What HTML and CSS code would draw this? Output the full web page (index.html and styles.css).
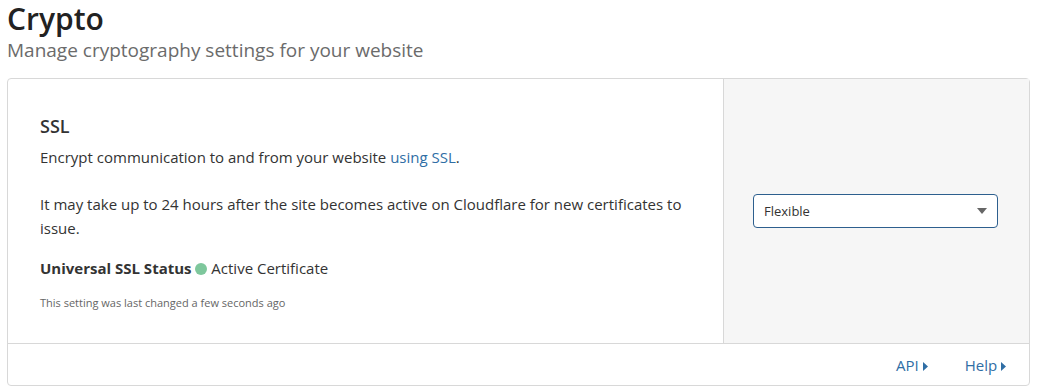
FILE: index.html
```html
<!DOCTYPE html>
<html lang="en">
<head>
    <meta charset="UTF-8">
    <title>Crypto</title>
    <link rel="stylesheet" href="styles.css">
</head>
<body>
    <h1 class="page-title">Crypto</h1>
    <p class="page-sub">Manage cryptography settings for your website</p>

    <div class="card">
        <div class="card-body">
            <div class="card-main">
                <h3 class="card-title">SSL</h3>
                <p>Encrypt communication to and from your website <a href="#">using SSL</a>.</p>
                <p class="note">It may take up to 24 hours after the site becomes active on Cloudflare for new certificates to issue.</p>
                <p class="status"><strong>Universal SSL Status</strong> <span class="dot"></span> Active Certificate</p>
                <p class="changed">This setting was last changed a few seconds ago</p>
            </div>
            <div class="card-side">
                <div class="select">
                    <span>Flexible</span>
                    <svg width="10" height="6" viewBox="0 0 10 6"><path d="M0 0h10L5 6z" fill="#666"/></svg>
                </div>
            </div>
        </div>
        <div class="card-foot">
            <a href="#">API <svg width="5" height="9" viewBox="0 0 5 9"><path d="M0 0l5 4.5L0 9z" fill="#2f6ea5"/></svg></a>
            <a href="#">Help <svg width="5" height="9" viewBox="0 0 5 9"><path d="M0 0l5 4.5L0 9z" fill="#2f6ea5"/></svg></a>
        </div>
    </div>
</body>
</html>
```

FILE: styles.css
```css
body { margin: 0; padding: 0 8px 0 7px; font-family: "Open Sans", sans-serif; color: #333; background: #fff; }
.page-title { font-size: 30px; font-weight: 600; color: #222; margin: 0; line-height: 38px; }
.page-sub { font-size: 19px; color: #6b6b6b; margin: 0 0 15px; line-height: 25px; }
.card { border: 1px solid #d8d8d8; border-radius: 4px; }
.card-body { display: flex; border-bottom: 1px solid #d8d8d8; }
.card-main { flex: 1; padding: 34px 32px 30px; }
.card-main p { font-size: 15px; line-height: 24px; margin: 0 0 23px; }
.card-main .note { margin-bottom: 16px; }
.card-title { font-size: 18px; font-weight: 600; margin: 0 0 6px; line-height: 26px; }
.card-main a { color: #2f6ea5; text-decoration: none; }
.card-main .status { margin-bottom: 13px; }
.dot { display: inline-block; width: 12px; height: 12px; border-radius: 50%; background: #7ec79c; vertical-align: -1px; }
.card-main .changed { font-size: 11px; color: #666; margin: 0; line-height: 20px; }
.card-side { width: 306px; background: #f6f6f6; border-left: 1px solid #d8d8d8; display: flex; align-items: center; padding-left: 29px; box-sizing: border-box; }
.select { width: 245px; height: 34px; box-sizing: border-box; border: 1px solid #2d5f8e; border-radius: 4px; background: #fff; display: flex; align-items: center; justify-content: space-between; padding: 0 10px; font-size: 13px; }
.card-foot { display: flex; justify-content: flex-end; gap: 37px; padding: 0 23px 0 0; height: 41px; align-items: center; }
.card-foot a { color: #2f6ea5; text-decoration: none; font-size: 15px; }
```
